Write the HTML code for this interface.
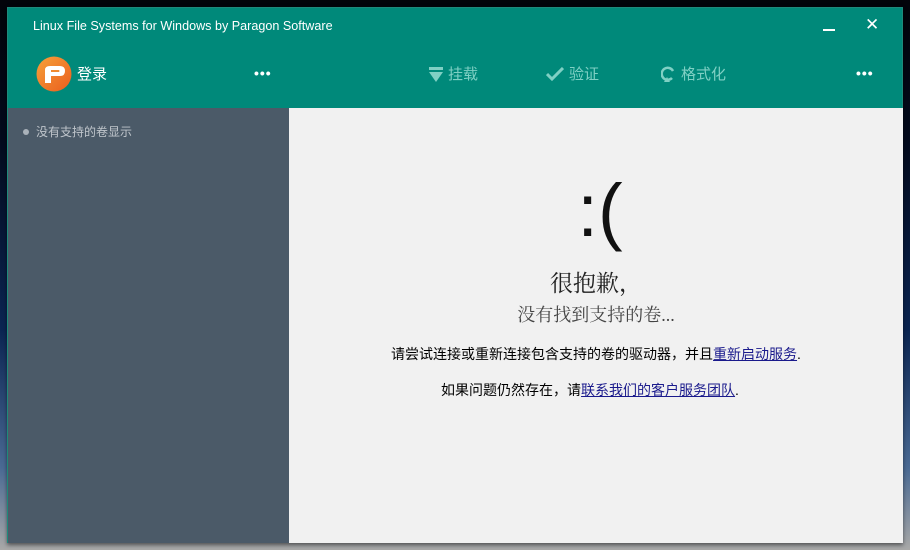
<!DOCTYPE html>
<html><head><meta charset="utf-8"><style>
*{margin:0;padding:0;box-sizing:border-box}
body{width:910px;height:550px;overflow:hidden;position:relative;font-family:"Liberation Sans","Noto Sans CJK SC",sans-serif;
background:linear-gradient(180deg,#02040a 0%,#030a1c 25%,#0b2552 60%,#4a6a94 85%,#a9a9a8 100%);}
.win{position:absolute;left:7px;top:7px;width:896px;height:536px;background:#00897a;border:1px solid #1e8a7c;box-shadow:0 2px 4px rgba(0,0,0,.5)}
.title{position:absolute;left:25px;top:11px;color:#fff;font-size:12.6px}
.side{position:absolute;left:0;top:100px;width:281px;height:435px;background:#4b5a68}
.main{position:absolute;left:281px;top:100px;width:614px;height:435px;background:#f1f1f1}
.t{position:absolute;color:#fff;font-size:15px;white-space:nowrap}
.dim{color:#7fd0c4}
.dots{position:absolute;color:#fff;font-size:14px;letter-spacing:1px;font-weight:bold}
.c{position:absolute;left:0;width:614px;text-align:center;white-space:nowrap}
a{color:#1a1a8c;text-decoration:underline}
</style></head><body>
<div class="win">
<div class="title">Linux File Systems for Windows by Paragon Software</div>
<div style="position:absolute;left:815px;top:21px;width:12px;height:1.5px;background:#fff"></div>
<div style="position:absolute;left:857px;top:7px;color:#fff;font-size:17px">✕</div>
<svg style="position:absolute;left:28px;top:48px" width="36" height="36" viewBox="0 0 36 36"><defs><linearGradient id="g" x1="0" y1="0" x2="1" y2="1"><stop offset="0" stop-color="#f6a13a"/><stop offset="1" stop-color="#ea5d1e"/></linearGradient></defs><circle cx="18" cy="18" r="17.5" fill="url(#g)"/><path d="M9 27 L9 14 Q9 10 14 10 L24 10 Q29 10 29 15 Q29 20 24 20 L15 20 L15 27 Z" fill="#fff"/><path d="M15 14 L23 14 Q24 15 23 16 L15 16Z" fill="#f08a30"/></svg>
<div class="t" style="left:69px;top:55px">登录</div>
<div class="dots" style="left:246px;top:57px">•••</div>
<svg style="position:absolute;left:421px;top:58px" width="14" height="17"><rect x="0" y="1" width="14" height="3" fill="#7fd0c4"/><path d="M0 6 L14 6 L7 16Z" fill="#7fd0c4"/></svg>
<div class="t dim" style="left:440px;top:55px">挂载</div>
<svg style="position:absolute;left:538px;top:59px" width="18" height="14"><path d="M1 7 L6 12 L17 1" stroke="#7fd0c4" stroke-width="3" fill="none"/></svg>
<div class="t dim" style="left:561px;top:55px">验证</div>
<svg style="position:absolute;left:653px;top:58px" width="15" height="16"><path d="M11 12 A6 6 0 1 1 12 5" stroke="#7fd0c4" stroke-width="2.5" fill="none"/><path d="M6 11 L9 16 L3 16Z" fill="#7fd0c4"/></svg>
<div class="t dim" style="left:673px;top:55px">格式化</div>
<div class="dots" style="left:848px;top:57px">•••</div>
<div class="side">
<div style="position:absolute;left:15px;top:21px;width:6px;height:6px;border-radius:50%;background:#aab2ba"></div>
<div style="position:absolute;left:28px;top:15px;color:#c0c6cc;font-size:12px">没有支持的卷显示</div>
</div>
<div class="main">
<div class="c" style="top:58px;font-family:'Liberation Sans',sans-serif;font-size:74px;color:#111;left:4px;line-height:90px">:(</div>
<div class="c" style="top:157px;font-family:'Liberation Serif','Noto Serif CJK SC',serif;font-size:23px;color:#222">很抱歉，</div>
<div class="c" style="top:193px;font-family:'Liberation Serif','Noto Serif CJK SC',serif;font-size:18px;color:#444">没有找到支持的卷...</div>
<div class="c" style="top:236px;font-size:14px;color:#000">请尝试连接或重新连接包含支持的卷的驱动器，并且<a>重新启动服务</a>.</div>
<div class="c" style="top:272px;font-size:14px;color:#000;left:-6px">如果问题仍然存在，请<a>联系我们的客户服务团队</a>.</div>
</div>
</div>
</body></html>
